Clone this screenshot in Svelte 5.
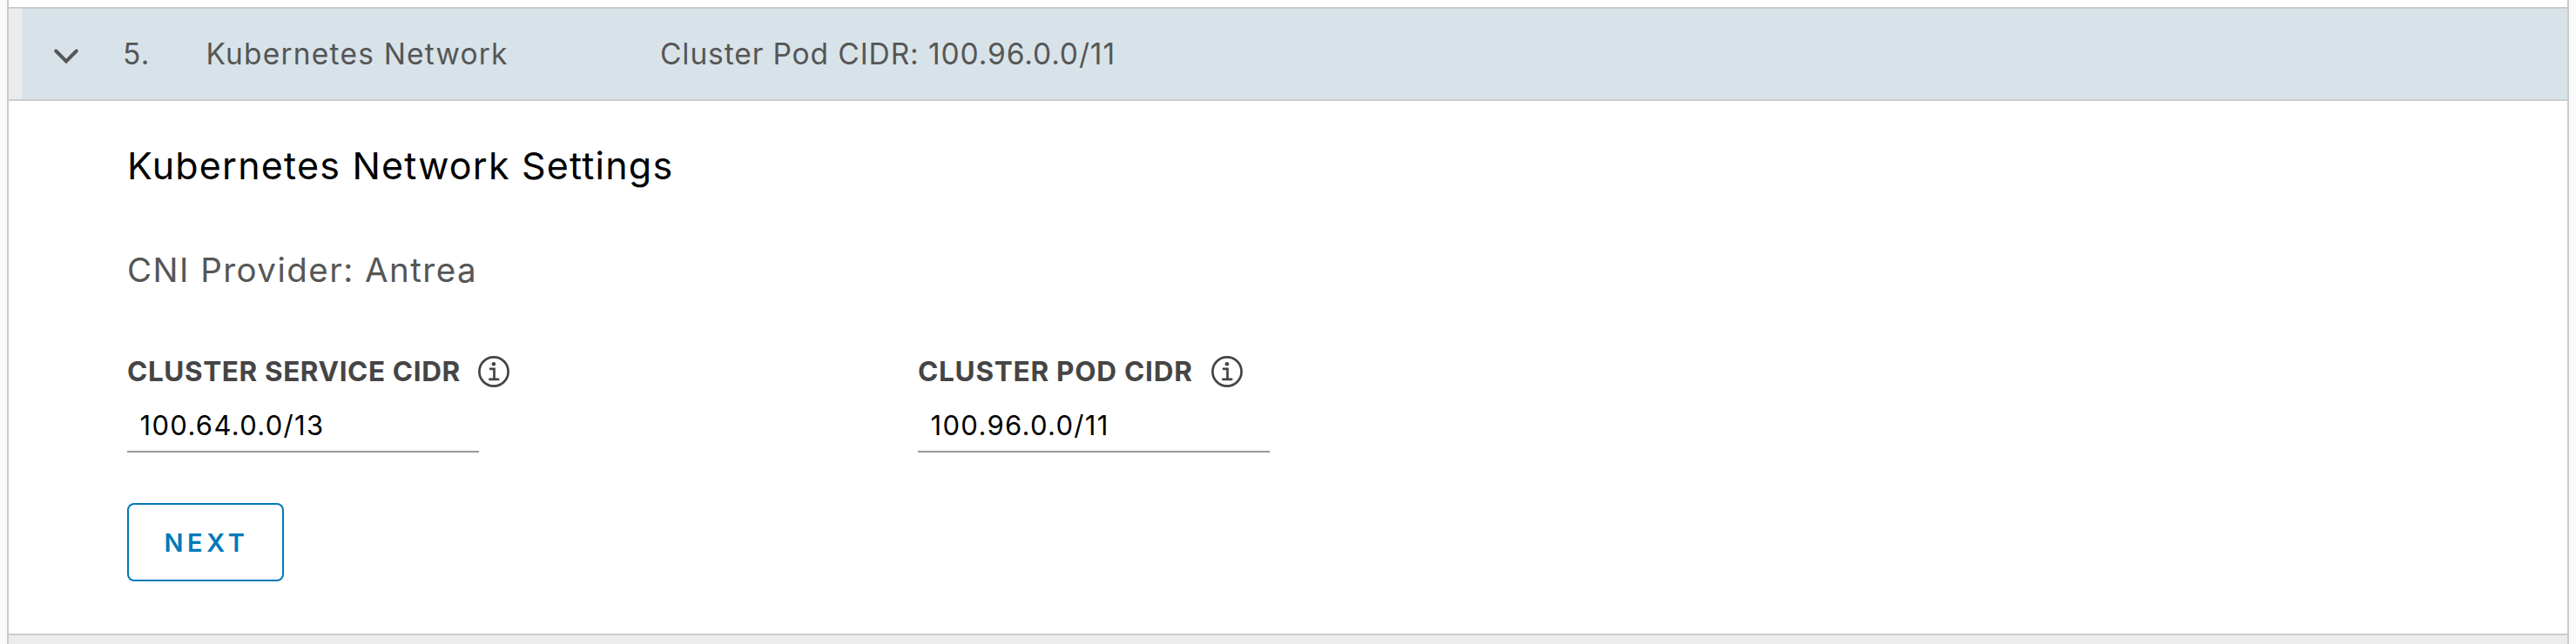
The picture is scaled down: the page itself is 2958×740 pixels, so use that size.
<script>
  const fields = [
    { id: 'service', label: 'CLUSTER SERVICE CIDR', value: '100.64.0.0/13' },
    { id: 'pod', label: 'CLUSTER POD CIDR', value: '100.96.0.0/11' }
  ];
</script>

<div class="wizard">
  <div class="previous"></div>
  <header>
    <svg class="chevron" viewBox="0 0 32 20" fill="none" stroke="#565656" stroke-width="4" stroke-linecap="round" stroke-linejoin="miter">
      <path d="M4.2 3.5 16 15.4 27.8 3.5" />
    </svg>
    <span class="number">5.</span>
    <span class="title">Kubernetes Network</span>
    <span class="summary">Cluster Pod CIDR: 100.96.0.0/11</span>
  </header>
  <section>
    <h1>Kubernetes Network Settings</h1>
    <p>CNI Provider: Antrea</p>
    <div class="fields">
      {#each fields as f}
        <div class="field {f.id}">
          <label for={f.id}>
            <span>{f.label}</span>
            <svg viewBox="0 0 36 36" fill="none" stroke="#454545">
              <circle cx="18" cy="18" r="16.6" stroke-width="2.7" />
              <circle cx="17.9" cy="9.2" r="2.3" fill="#454545" stroke="none" />
              <path d="M14 14.8H18.5V26.8M13.3 26.8H23.2" stroke-width="2.7" stroke-linecap="round" />
            </svg>
          </label>
          <input id={f.id} type="text" value={f.value} />
        </div>
      {/each}
    </div>
    <button type="button">NEXT</button>
  </section>
  <div class="following"></div>
</div>

<style>
  :global(body) { background: #fafafa; }
  .wizard {
    box-sizing: border-box;
    height: 740px;
    margin: 0 8px;
    border: solid #ccc;
    border-width: 0 2px;
    background: #fff;
    font-family: Inter, sans-serif;
    display: flex;
    flex-direction: column;
    overflow: hidden;
  }
  .previous { height: 8px; flex: none; }
  header {
    box-sizing: border-box;
    height: 108px;
    flex: none;
    display: flex;
    align-items: center;
    border: solid #ccc;
    border-width: 2px 0;
    background: linear-gradient(90deg, #ececec 15px, #d8e3e9 15px);
    padding-left: 50px;
    color: #565656;
    font-size: 33.5px;
    line-height: 40px;
    white-space: nowrap;
  }
  .chevron { width: 32px; height: 20px; margin-top: 6px; }
  .number { width: 95.5px; margin-left: 49px; letter-spacing: 1.3px; }
  .title { width: 521.5px; letter-spacing: 1.2px; }
  .summary { letter-spacing: 0.9px; }
  section {
    flex: 1;
    padding: 43.5px 0 0 136px;
  }
  h1 {
    margin: 0;
    color: #000;
    font-size: 43px;
    font-weight: 400;
    line-height: 60px;
    letter-spacing: 1.21px;
  }
  p {
    margin: 65.5px 0 0;
    color: #565656;
    font-size: 38.5px;
    line-height: 50px;
    letter-spacing: 1.47px;
  }
  .fields {
    display: grid;
    grid-template-columns: 908px 404px;
    margin-top: 74px;
  }
  label {
    display: flex;
    align-items: center;
    height: 36px;
    color: #454545;
    font-size: 31.5px;
    font-weight: 650;
    line-height: 36px;
    letter-spacing: 0.6px;
    white-space: nowrap;
  }
  .pod label { letter-spacing: 0.75px; }
  label span { width: 384px; }
  .pod label span { width: 318px; }
  label svg { width: 36px; height: 36px; margin-left: 19px; }
  input {
    box-sizing: border-box;
    display: block;
    width: 404px;
    height: 60px;
    margin-top: 15px;
    padding: 0 14px 2px 14.5px;
    border: 0;
    border-bottom: 2px solid #999;
    border-radius: 0;
    background: none;
    color: #000;
    font: 400 31px/56px Inter, sans-serif;
    letter-spacing: 1.32px;
    outline: none;
  }
  button {
    box-sizing: border-box;
    display: block;
    width: 180px;
    height: 90px;
    margin-top: 58px;
    padding: 1px 0 0 2px;
    border: 2px solid #0079b8;
    border-radius: 8px;
    background: #fff;
    color: #0079b8;
    font: 600 29px/85px Inter, sans-serif;
    letter-spacing: 4.7px;
  }
  .following {
    height: 10px;
    flex: none;
    border-top: 2px solid #ccc;
    background: #ececec;
  }
</style>
